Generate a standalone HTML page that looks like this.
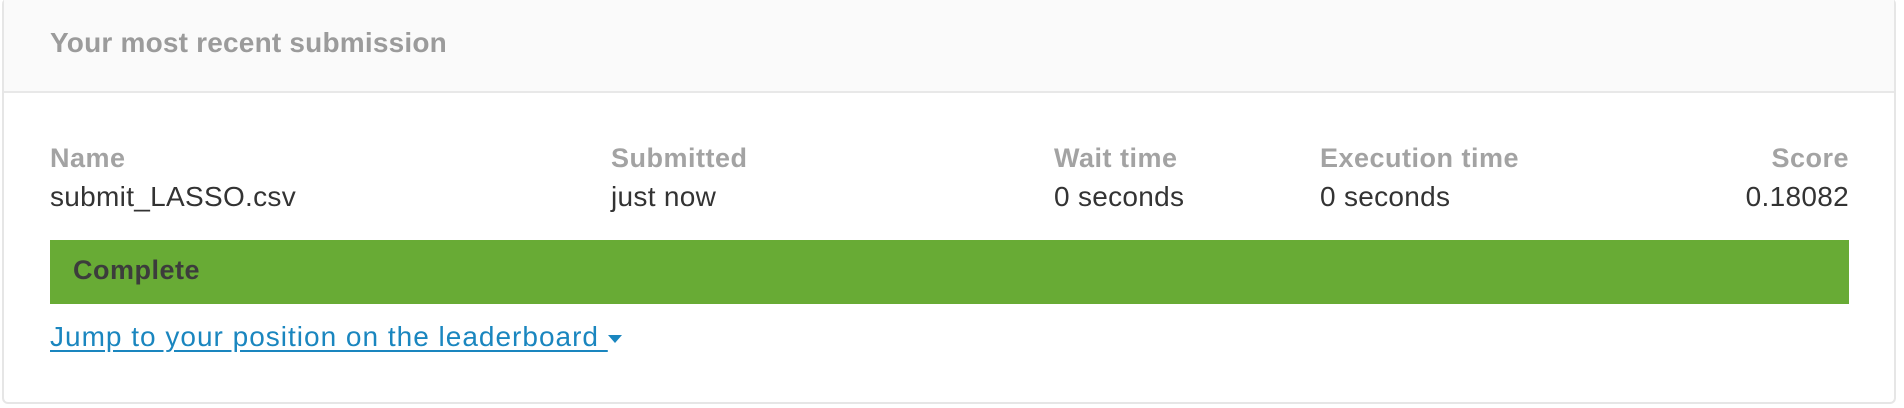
<!DOCTYPE html>
<html><head><style>
body{margin:0;width:1904px;height:408px;background:#fff;font-family:"Liberation Sans",sans-serif;overflow:hidden;position:relative}
.card{position:absolute;left:2px;top:-2px;width:1894px;height:406px;border:2px solid #e6e6e6;border-radius:6px;box-sizing:border-box}
.hdr{position:absolute;left:0;top:0;right:0;height:91px;background:#fafafa;border-bottom:2px solid #e8e8e8}
.t{position:absolute;white-space:nowrap}
.h{font-size:28px;font-weight:bold;color:#9b9b9b;letter-spacing:0.2px}
.l{font-size:27px;font-weight:bold;color:#a3a3a3;letter-spacing:0.5px}
.v{font-size:28px;color:#333;letter-spacing:0.3px}
</style></head><body>
<div class="card"><div class="hdr"></div></div>
<div class="t h" style="left:50px;top:27px">Your most recent submission</div>
<div class="t l" style="left:50px;top:143px">Name</div>
<div class="t l" style="left:611px;top:143px">Submitted</div>
<div class="t l" style="left:1054px;top:143px">Wait time</div>
<div class="t l" style="left:1320px;top:143px">Execution time</div>
<div class="t l" style="right:55px;top:143px">Score</div>
<div class="t v" style="left:50px;top:181px">submit_LASSO.csv</div>
<div class="t v" style="left:611px;top:181px">just now</div>
<div class="t v" style="left:1054px;top:181px">0 seconds</div>
<div class="t v" style="left:1320px;top:181px">0 seconds</div>
<div class="t v" style="right:55px;top:181px">0.18082</div>
<div style="position:absolute;left:50px;top:240px;width:1799px;height:64px;background:#68ab35"></div>
<div class="t l" style="left:73px;top:255px;color:#3c3c3c">Complete</div>
<div class="t v" style="left:50px;top:321px;color:#1a86bf;letter-spacing:1px;text-decoration:underline;text-underline-offset:4px">Jump to your position on the leaderboard <span style="display:inline-block;width:0;height:0;border-left:7px solid transparent;border-right:7px solid transparent;border-top:8px solid #1a86bf;vertical-align:middle;text-decoration:none"></span></div>
</body></html>
